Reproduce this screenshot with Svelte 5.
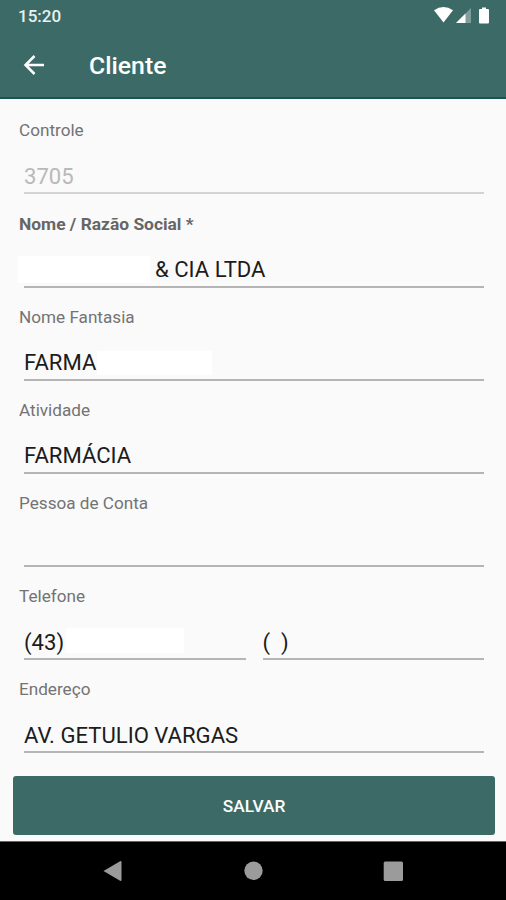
<script lang="ts">
    type Input = {
        value: string;
        disabled?: boolean;
        indent?: number;
        mask?: { left: number; top: number; width: number; height: number };
    };
    type Field = {
        label: string;
        required?: boolean;
        inputs: Input[];
    };

    let fields: Field[] = $state([
        { label: "Controle", inputs: [{ value: "3705", disabled: true }] },
        {
            label: "Nome / Razão Social *",
            required: true,
            inputs: [{ value: "& CIA LTDA", indent: 131, mask: { left: -6, top: 10, width: 132, height: 27 } }],
        },
        {
            label: "Nome Fantasia",
            inputs: [{ value: "FARMA", mask: { left: 73, top: 12, width: 115, height: 24 } }],
        },
        { label: "Atividade", inputs: [{ value: "FARMÁCIA" }] },
        { label: "Pessoa de Conta", inputs: [{ value: "" }] },
        {
            label: "Telefone",
            inputs: [
                { value: "(43)", mask: { left: 42, top: 10, width: 118, height: 25 } },
                { value: "(  )" },
            ],
        },
        { label: "Endereço", inputs: [{ value: "AV. GETULIO VARGAS" }] },
    ]);
</script>

<div class="screen">
    <header>
        <div class="status">
            <span>15:20</span>
            <svg width="56" height="18" viewBox="0 0 56 18" fill="#fff">
                <path d="M0 3.2 Q9.5 -3 19 3.2 L9.5 15.5 Z" />
                <path d="M22 16 L37 1 V16 Z" opacity="0.35" />
                <path d="M22 16 L31.5 6.5 V16 Z" />
                <path d="M48 0.5 h4 v1.5 h2 q1 0 1 1 v12.5 q0 1 -1 1 h-8 q-1 0 -1 -1 v-12.5 q0 -1 1 -1 h2 z" />
            </svg>
        </div>
        <div class="bar">
            <button class="back" aria-label="Voltar">
                <svg width="22" height="20" viewBox="0 0 22 20" fill="none" stroke="#fff" stroke-width="2.5">
                    <path d="M21 10 H2.5 M11.5 1 L2.5 10 L11.5 19" />
                </svg>
            </button>
            <h1>Cliente</h1>
        </div>
    </header>

    <main>
        {#each fields as field}
            <div class="field">
                <span class="label" class:required={field.required}>{field.label}</span>
                <div class="row">
                    {#each field.inputs as input}
                        <div class="line" class:disabled={input.disabled}>
                            <input
                                type="text"
                                aria-label={field.label}
                                bind:value={input.value}
                                disabled={input.disabled}
                                style:padding-left="{input.indent ?? 0}px"
                            />
                            {#if input.mask}
                                <span
                                    class="mask"
                                    style:left="{input.mask.left}px"
                                    style:top="{input.mask.top}px"
                                    style:width="{input.mask.width}px"
                                    style:height="{input.mask.height}px"
                                ></span>
                            {/if}
                        </div>
                    {/each}
                </div>
            </div>
        {/each}
    </main>

    <button class="save">SALVAR</button>

    <nav>
        <svg width="506" height="58" viewBox="0 0 506 58" fill="#9b9b9b">
            <path d="M103.5 29 L120.5 19 Q121.5 19 121.5 20 V38 Q121.5 39 120.5 39 Z" />
            <circle cx="253.5" cy="28.8" r="9.2" />
            <rect x="383.7" y="19.6" width="19.3" height="19.3" rx="1.5" />
        </svg>
    </nav>
</div>

<style>
    :global(body) {
        margin: 0;
    }
    .screen {
        display: flex;
        flex-direction: column;
        width: 506px;
        height: 900px;
        overflow: hidden;
        background-color: #fafafa;
        font-family: Roboto, sans-serif;
    }
    header {
        box-sizing: border-box;
        height: 99px;
        flex-shrink: 0;
        background-color: #3c6b67;
        border-bottom: 2px solid #175650;
        color: #fff;
    }
    .status {
        display: flex;
        justify-content: space-between;
        align-items: center;
        height: 32px;
        padding: 0 16px 0 18px;
        font-size: 17px;
        font-weight: 500;
        color: #e8f1f0;
    }
    .bar {
        display: flex;
        align-items: center;
        height: 65px;
        padding-left: 23px;
    }
    .back {
        display: flex;
        width: 66px;
        padding: 0;
        border: none;
        background: none;
    }
    h1 {
        margin: 2px 0 0;
        font-size: 24.8px;
        font-weight: 500;
        line-height: 30px;
    }
    main {
        height: 677px;
        box-sizing: border-box;
        padding: 21.45px 22px 0 19px;
        flex-shrink: 0;
    }
    .field {
        height: 93.15px;
    }
    .label {
        display: block;
        height: 20px;
        font-size: 17.15px;
        line-height: 20px;
        color: #737373;
    }
    .required {
        font-size: 17.4px;
        font-weight: 700;
        color: #666;
    }
    .row {
        display: flex;
        gap: 17px;
        padding: 12px 0 0 5px;
    }
    .line {
        position: relative;
        flex: 1;
        height: 40px;
        border-bottom: 2px solid #b5b5b5;
    }
    .line.disabled {
        border-bottom-color: #d3d3d3;
    }
    input {
        box-sizing: border-box;
        width: 100%;
        height: 30px;
        margin: 8.6px 0 0;
        padding: 0;
        border: none;
        outline: none;
        background: none;
        font-family: inherit;
        font-size: 22.1px;
        line-height: 30px;
        color: #1c1c1c;
        white-space: pre;
    }
    input:disabled {
        color: #b9b9b9;
    }
    .mask {
        position: absolute;
        background-color: #fff;
    }
    .save {
        width: 482px;
        height: 59px;
        margin: 0 0 0 13px;
        padding: 0;
        flex-shrink: 0;
        border: none;
        border-radius: 3px;
        background-color: #3c6b67;
        font-family: inherit;
        font-size: 17.3px;
        font-weight: 500;
        color: #fff;
    }
    nav {
        height: 58px;
        margin-top: auto;
        flex-shrink: 0;
        background-color: #000;
        border-top: 1px solid #666;
    }
</style>
